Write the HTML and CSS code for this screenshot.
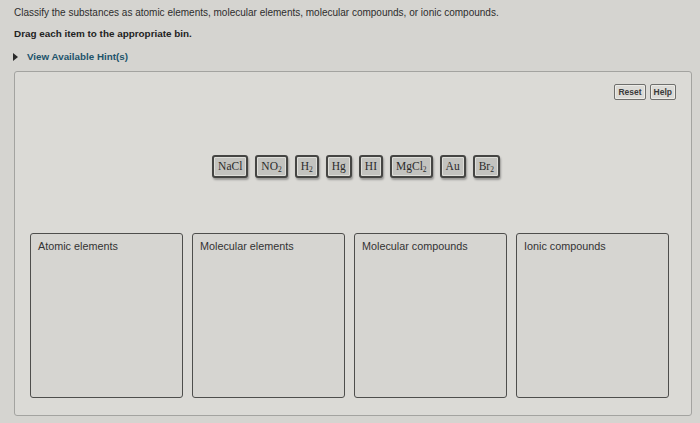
FILE: index.html
```html
<!DOCTYPE html>
<html>
<head>
<meta charset="utf-8">
<link rel="stylesheet" href="styles.css">
</head>
<body>
<div class="page">
  <p class="prompt">Classify the substances as atomic elements, molecular elements, molecular compounds, or ionic compounds.</p>
  <p class="instr">Drag each item to the appropriate bin.</p>
  <div class="hint"><span class="tri"></span><span>View Available Hint(s)</span></div>
  <div class="panel">
    <div class="tools">
      <button class="btn">Reset</button>
      <button class="btn">Help</button>
    </div>
    <div class="chips">
      <span class="chip">NaCl</span>
      <span class="chip">NO<sub>2</sub></span>
      <span class="chip">H<sub>2</sub></span>
      <span class="chip">Hg</span>
      <span class="chip">HI</span>
      <span class="chip">MgCl<sub>2</sub></span>
      <span class="chip">Au</span>
      <span class="chip">Br<sub>2</sub></span>
    </div>
    <div class="bins">
      <div class="bin"><span class="label">Atomic elements</span></div>
      <div class="bin"><span class="label">Molecular elements</span></div>
      <div class="bin"><span class="label">Molecular compounds</span></div>
      <div class="bin"><span class="label">Ionic compounds</span></div>
    </div>
  </div>
</div>
</body>
</html>
```
FILE: styles.css
```css
html, body {
  margin: 0;
  padding: 0;
  background: #d5d4d0;
  font-family: "Liberation Sans", Arial, sans-serif;
  color: #2a2a2a;
}
.page {
  width: 700px;
  height: 423px;
  box-sizing: border-box;
  padding: 7px 8px 0 14px;
  display: flex;
  flex-direction: column;
}
.prompt {
  margin: 0;
  font-size: 10px;
  line-height: 12px;
  color: #2d2d2d;
}
.instr {
  margin: 9px 0 0 0;
  font-size: 9.9px;
  line-height: 12px;
  font-weight: bold;
  color: #222;
}
.hint {
  margin: 11px 0 0 -1px;
  display: flex;
  align-items: center;
  gap: 9px;
  font-size: 9.8px;
  line-height: 12px;
  font-weight: bold;
  color: #21536b;
}
.tri {
  width: 0;
  height: 0;
  border-top: 4px solid transparent;
  border-bottom: 4px solid transparent;
  border-left: 5px solid #2a2a2a;
}
.panel {
  margin-top: 8px;
  height: 345px;
  box-sizing: border-box;
  border: 1px solid #a3a3a0;
  border-radius: 3px;
  background: #dbdad6;
  padding: 12px 15px 0 15px;
  display: flex;
  flex-direction: column;
}
.tools {
  display: flex;
  justify-content: flex-end;
  gap: 4px;
}
.btn {
  font-family: "Liberation Sans", Arial, sans-serif;
  font-size: 8.5px;
  font-weight: bold;
  color: #3a3a3a;
  background: #dcdbd7;
  border: 1px solid #6e6e6c;
  border-radius: 2px;
  height: 16px;
  padding: 0 3px;
  line-height: 14px;
  box-shadow: inset 0 0 0 1px #ecebe7;
}
.chips {
  margin-top: 55px;
  display: flex;
  justify-content: center;
  gap: 7px;
  padding-left: 6px;
}
.chip {
  font-family: "Liberation Serif", "Times New Roman", serif;
  font-size: 11.5px;
  color: #2b2b2b;
  height: 19px;
  line-height: 19px;
  padding: 0 4px;
  background: #c3c3bf;
  border: 2px solid #454543;
  border-radius: 3px;
  box-shadow: inset 0 0 0 1px #deded9, 1px 2px 2px rgba(0,0,0,0.3);
}
.chip sub {
  font-size: 7.5px;
  line-height: 0;
  vertical-align: -2px;
}
.bins {
  margin-top: 55px;
  display: grid;
  grid-template-columns: repeat(4, 153px);
  column-gap: 9px;
  padding-right: 10px;
}
.bin {
  height: 165px;
  box-sizing: border-box;
  border: 1.5px solid #4e4e4c;
  border-radius: 3px;
  background: #d6d5d1;
  padding: 6px 7px;
  font-size: 10.8px;
  line-height: 13px;
}
.label {
  color: #333;
}
```
